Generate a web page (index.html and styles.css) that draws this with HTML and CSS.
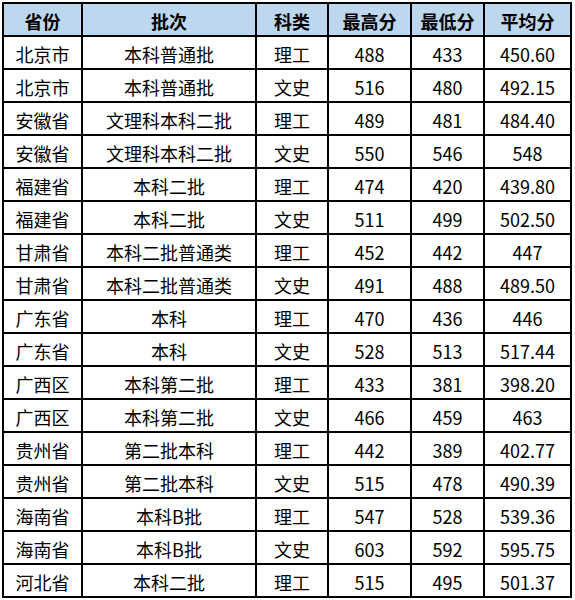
FILE: index.html
```html
<!DOCTYPE html>
<html lang="zh">
<head>
<meta charset="utf-8">
<link rel="stylesheet" href="styles.css">
</head>
<body>
<table class="score-table">
  <colgroup>
    <col class="c1"><col class="c2"><col class="c3"><col class="c4"><col class="c5"><col class="c6">
  </colgroup>
  <thead>
    <tr><th>省份</th><th>批次</th><th>科类</th><th>最高分</th><th>最低分</th><th>平均分</th></tr>
  </thead>
  <tbody>
    <tr><td>北京市</td><td>本科普通批</td><td>理工</td><td>488</td><td>433</td><td>450.60</td></tr>
    <tr><td>北京市</td><td>本科普通批</td><td>文史</td><td>516</td><td>480</td><td>492.15</td></tr>
    <tr><td>安徽省</td><td>文理科本科二批</td><td>理工</td><td>489</td><td>481</td><td>484.40</td></tr>
    <tr><td>安徽省</td><td>文理科本科二批</td><td>文史</td><td>550</td><td>546</td><td>548</td></tr>
    <tr><td>福建省</td><td>本科二批</td><td>理工</td><td>474</td><td>420</td><td>439.80</td></tr>
    <tr><td>福建省</td><td>本科二批</td><td>文史</td><td>511</td><td>499</td><td>502.50</td></tr>
    <tr><td>甘肃省</td><td>本科二批普通类</td><td>理工</td><td>452</td><td>442</td><td>447</td></tr>
    <tr><td>甘肃省</td><td>本科二批普通类</td><td>文史</td><td>491</td><td>488</td><td>489.50</td></tr>
    <tr><td>广东省</td><td>本科</td><td>理工</td><td>470</td><td>436</td><td>446</td></tr>
    <tr><td>广东省</td><td>本科</td><td>文史</td><td>528</td><td>513</td><td>517.44</td></tr>
    <tr><td>广西区</td><td>本科第二批</td><td>理工</td><td>433</td><td>381</td><td>398.20</td></tr>
    <tr><td>广西区</td><td>本科第二批</td><td>文史</td><td>466</td><td>459</td><td>463</td></tr>
    <tr><td>贵州省</td><td>第二批本科</td><td>理工</td><td>442</td><td>389</td><td>402.77</td></tr>
    <tr><td>贵州省</td><td>第二批本科</td><td>文史</td><td>515</td><td>478</td><td>490.39</td></tr>
    <tr><td>海南省</td><td>本科B批</td><td>理工</td><td>547</td><td>528</td><td>539.36</td></tr>
    <tr><td>海南省</td><td>本科B批</td><td>文史</td><td>603</td><td>592</td><td>595.75</td></tr>
    <tr><td>河北省</td><td>本科二批</td><td>理工</td><td>515</td><td>495</td><td>501.37</td></tr>
  </tbody>
</table>
</body>
</html>
```

FILE: styles.css
```css
html, body {
  margin: 0;
  padding: 0;
  background: #ffffff;
}
body {
  padding: 2px 0 0 2px;
  font-family: "Noto Sans CJK SC", "Noto Sans", sans-serif;
  color: #000;
}
.score-table {
  border-collapse: collapse;
  table-layout: fixed;
  width: 570px;
}
.c1 { width: 79px; }
.c2 { width: 174px; }
.c3 { width: 72px; }
.c4 { width: 83px; }
.c5 { width: 73px; }
.c6 { width: 87px; }
.score-table th,
.score-table td {
  border: 2px solid #000;
  height: 33px;
  padding: 3px 0 0 0;
  text-align: center;
  vertical-align: middle;
  font-size: 18px;
  font-weight: 400;
  line-height: 20px;
  white-space: nowrap;
  box-sizing: border-box;
}
.score-table th {
  background: #bdd7ee;
  font-weight: bold;
  font-size: 18px;
}
```
